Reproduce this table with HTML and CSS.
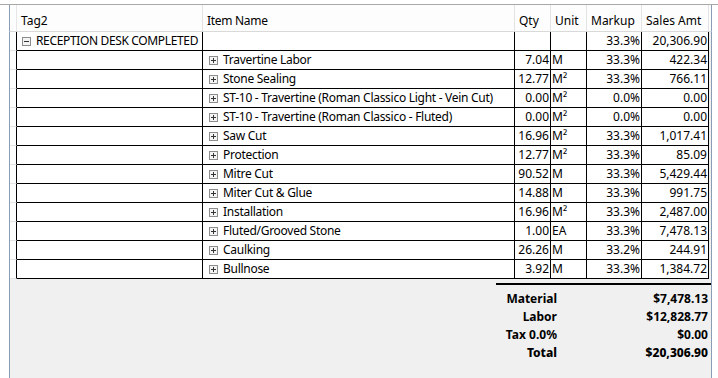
FILE: index.html
```html
<!DOCTYPE html>
<html>
<head>
<meta charset="utf-8">
<link rel="stylesheet" href="styles.css">
</head>
<body>
<div class="window">
  <div class="panel">
    <div class="head">
      <div class="rh"></div>
      <div class="hc c1">Tag2</div>
      <div class="hc c2">Item Name</div>
      <div class="hc c3">Qty</div>
      <div class="hc c4">Unit</div>
      <div class="hc c5">Markup</div>
      <div class="hc c6">Sales Amt</div>
    </div>
    <div class="rows">
      <div class="row">
        <div class="rh"></div>
        <div class="gc c1 first"><span class="exp minus"></span>RECEPTION DESK COMPLETED</div>
        <div class="gc c2"></div>
        <div class="gc c3 num"></div>
        <div class="gc c4"></div>
        <div class="gc c5 num">33.3%</div>
        <div class="gc c6 num">20,306.90</div>
      </div>
      <div class="row">
        <div class="rh"></div><div class="gc c1"></div>
        <div class="gc c2"><span class="exp plus"></span>Travertine Labor</div>
        <div class="gc c3 num">7.04</div><div class="gc c4">M</div>
        <div class="gc c5 num">33.3%</div><div class="gc c6 num">422.34</div>
      </div>
      <div class="row">
        <div class="rh"></div><div class="gc c1"></div>
        <div class="gc c2"><span class="exp plus"></span>Stone Sealing</div>
        <div class="gc c3 num">12.77</div><div class="gc c4">M²</div>
        <div class="gc c5 num">33.3%</div><div class="gc c6 num">766.11</div>
      </div>
      <div class="row">
        <div class="rh"></div><div class="gc c1"></div>
        <div class="gc c2"><span class="exp plus"></span>ST-10 - Travertine (Roman Classico Light - Vein Cut)</div>
        <div class="gc c3 num">0.00</div><div class="gc c4">M²</div>
        <div class="gc c5 num">0.0%</div><div class="gc c6 num">0.00</div>
      </div>
      <div class="row">
        <div class="rh"></div><div class="gc c1"></div>
        <div class="gc c2"><span class="exp plus"></span>ST-10 - Travertine (Roman Classico - Fluted)</div>
        <div class="gc c3 num">0.00</div><div class="gc c4">M²</div>
        <div class="gc c5 num">0.0%</div><div class="gc c6 num">0.00</div>
      </div>
      <div class="row">
        <div class="rh"></div><div class="gc c1"></div>
        <div class="gc c2"><span class="exp plus"></span>Saw Cut</div>
        <div class="gc c3 num">16.96</div><div class="gc c4">M²</div>
        <div class="gc c5 num">33.3%</div><div class="gc c6 num">1,017.41</div>
      </div>
      <div class="row">
        <div class="rh"></div><div class="gc c1"></div>
        <div class="gc c2"><span class="exp plus"></span>Protection</div>
        <div class="gc c3 num">12.77</div><div class="gc c4">M²</div>
        <div class="gc c5 num">33.3%</div><div class="gc c6 num">85.09</div>
      </div>
      <div class="row">
        <div class="rh"></div><div class="gc c1"></div>
        <div class="gc c2"><span class="exp plus"></span>Mitre Cut</div>
        <div class="gc c3 num">90.52</div><div class="gc c4">M</div>
        <div class="gc c5 num">33.3%</div><div class="gc c6 num">5,429.44</div>
      </div>
      <div class="row">
        <div class="rh"></div><div class="gc c1"></div>
        <div class="gc c2"><span class="exp plus"></span>Miter Cut &amp; Glue</div>
        <div class="gc c3 num">14.88</div><div class="gc c4">M</div>
        <div class="gc c5 num">33.3%</div><div class="gc c6 num">991.75</div>
      </div>
      <div class="row">
        <div class="rh"></div><div class="gc c1"></div>
        <div class="gc c2"><span class="exp plus"></span>Installation</div>
        <div class="gc c3 num">16.96</div><div class="gc c4">M²</div>
        <div class="gc c5 num">33.3%</div><div class="gc c6 num">2,487.00</div>
      </div>
      <div class="row">
        <div class="rh"></div><div class="gc c1"></div>
        <div class="gc c2"><span class="exp plus"></span>Fluted/Grooved Stone</div>
        <div class="gc c3 num">1.00</div><div class="gc c4">EA</div>
        <div class="gc c5 num">33.3%</div><div class="gc c6 num">7,478.13</div>
      </div>
      <div class="row">
        <div class="rh"></div><div class="gc c1"></div>
        <div class="gc c2"><span class="exp plus"></span>Caulking</div>
        <div class="gc c3 num">26.26</div><div class="gc c4">M</div>
        <div class="gc c5 num">33.2%</div><div class="gc c6 num">244.91</div>
      </div>
      <div class="row">
        <div class="rh"></div><div class="gc c1"></div>
        <div class="gc c2"><span class="exp plus"></span>Bullnose</div>
        <div class="gc c3 num">3.92</div><div class="gc c4">M</div>
        <div class="gc c5 num">33.3%</div><div class="gc c6 num">1,384.72</div>
      </div>
    </div>
    <div class="summary">
      <div class="totals">
        <div class="tl">Material</div><div class="tv">$7,478.13</div>
        <div class="tl">Labor</div><div class="tv">$12,828.77</div>
        <div class="tl">Tax 0.0%</div><div class="tv">$0.00</div>
        <div class="tl total">Total</div><div class="tv total">$20,306.90</div>
      </div>
    </div>
  </div>
</div>
</body>
</html>
```

FILE: styles.css
```css
* { box-sizing: border-box; }
html, body { margin: 0; height: 100%; }
body {
  background: #ffffff;
  font-family: "Noto Sans", "Open Sans", sans-serif;
  font-size: 12px;
  color: #000;
  overflow: hidden;
}
.window {
  height: 100%;
  padding-top: 4px;
}
.panel {
  border-top: 1px solid #a8a8a8;
  height: 100%;
  display: flex;
  flex-direction: column;
  width: 718px;
}
.head, .rows, .summary {
  margin-left: 9px;
  width: 703px;
  border-left: 1px solid #8a9db5;
  border-right: 1px solid #8a9db5;
}
.head {
  display: flex;
  height: 27px;
  background: #fdfdfd;
  border-bottom: 1px solid #d9d9d9;
}
.head .rh {
  width: 7px;
  border-right: 1px solid #e6e6e6;
}
.hc {
  padding-left: 4px;
  padding-top: 7px;
  line-height: 18px;
  border-right: 1px solid #e3e3e3;
  white-space: nowrap;
}
.hc.c2 { letter-spacing: -0.3px; }
.c1 { width: 186px; }
.c2 { width: 312px; }
.c3 { width: 36px; }
.c4 { width: 36px; }
.c5 { width: 55px; }
.c6 { width: 67px; }
.rows { background: #f0f0f0; }
.row {
  display: flex;
  height: 19px;
}
.row .rh {
  width: 7px;
  background: #fff;
  border-bottom: 1px solid #e4e4e4;
  border-right: 1px solid #000;
}
.gc {
  background: #fff;
  border-right: 1px solid #000;
  border-bottom: 1px solid #000;
  line-height: 18px;
  white-space: nowrap;
  overflow: hidden;
  display: flex;
  align-items: center;
}
.gc.c1.first { padding-left: 5px; letter-spacing: -0.35px; }
.gc.c2 { padding-left: 6px; letter-spacing: -0.28px; }
.gc.c4 { padding-left: 1px; }
.num { justify-content: flex-end; padding-right: 1px; }
.exp {
  display: inline-block;
  width: 9px;
  height: 9px;
  margin-right: 5px;
  flex: none;
  border: 1px solid #8c8c8c;
  background: #f4f4f4;
  position: relative;
}
.exp::before, .exp::after {
  content: "";
  position: absolute;
  background: #333;
}
.exp::before { left: 1px; top: 3px; width: 5px; height: 1px; }
.exp.plus::after { left: 3px; top: 1px; width: 1px; height: 5px; }
.summary {
  flex: 1;
  background: #f0f0f0;
  padding-left: 486px;
  padding-top: 4px;
}
.totals {
  width: 215px;
  border-top: 2px solid #000;
  padding-top: 5px;
  display: grid;
  grid-template-columns: 61px 1fr;
  grid-auto-rows: 18px;
  font-weight: 700;
}
.tl, .tv {
  text-align: right;
  line-height: 18px;
  white-space: nowrap;
}
.tv { padding-right: 3px; }
.total { font-weight: 800; }
```
